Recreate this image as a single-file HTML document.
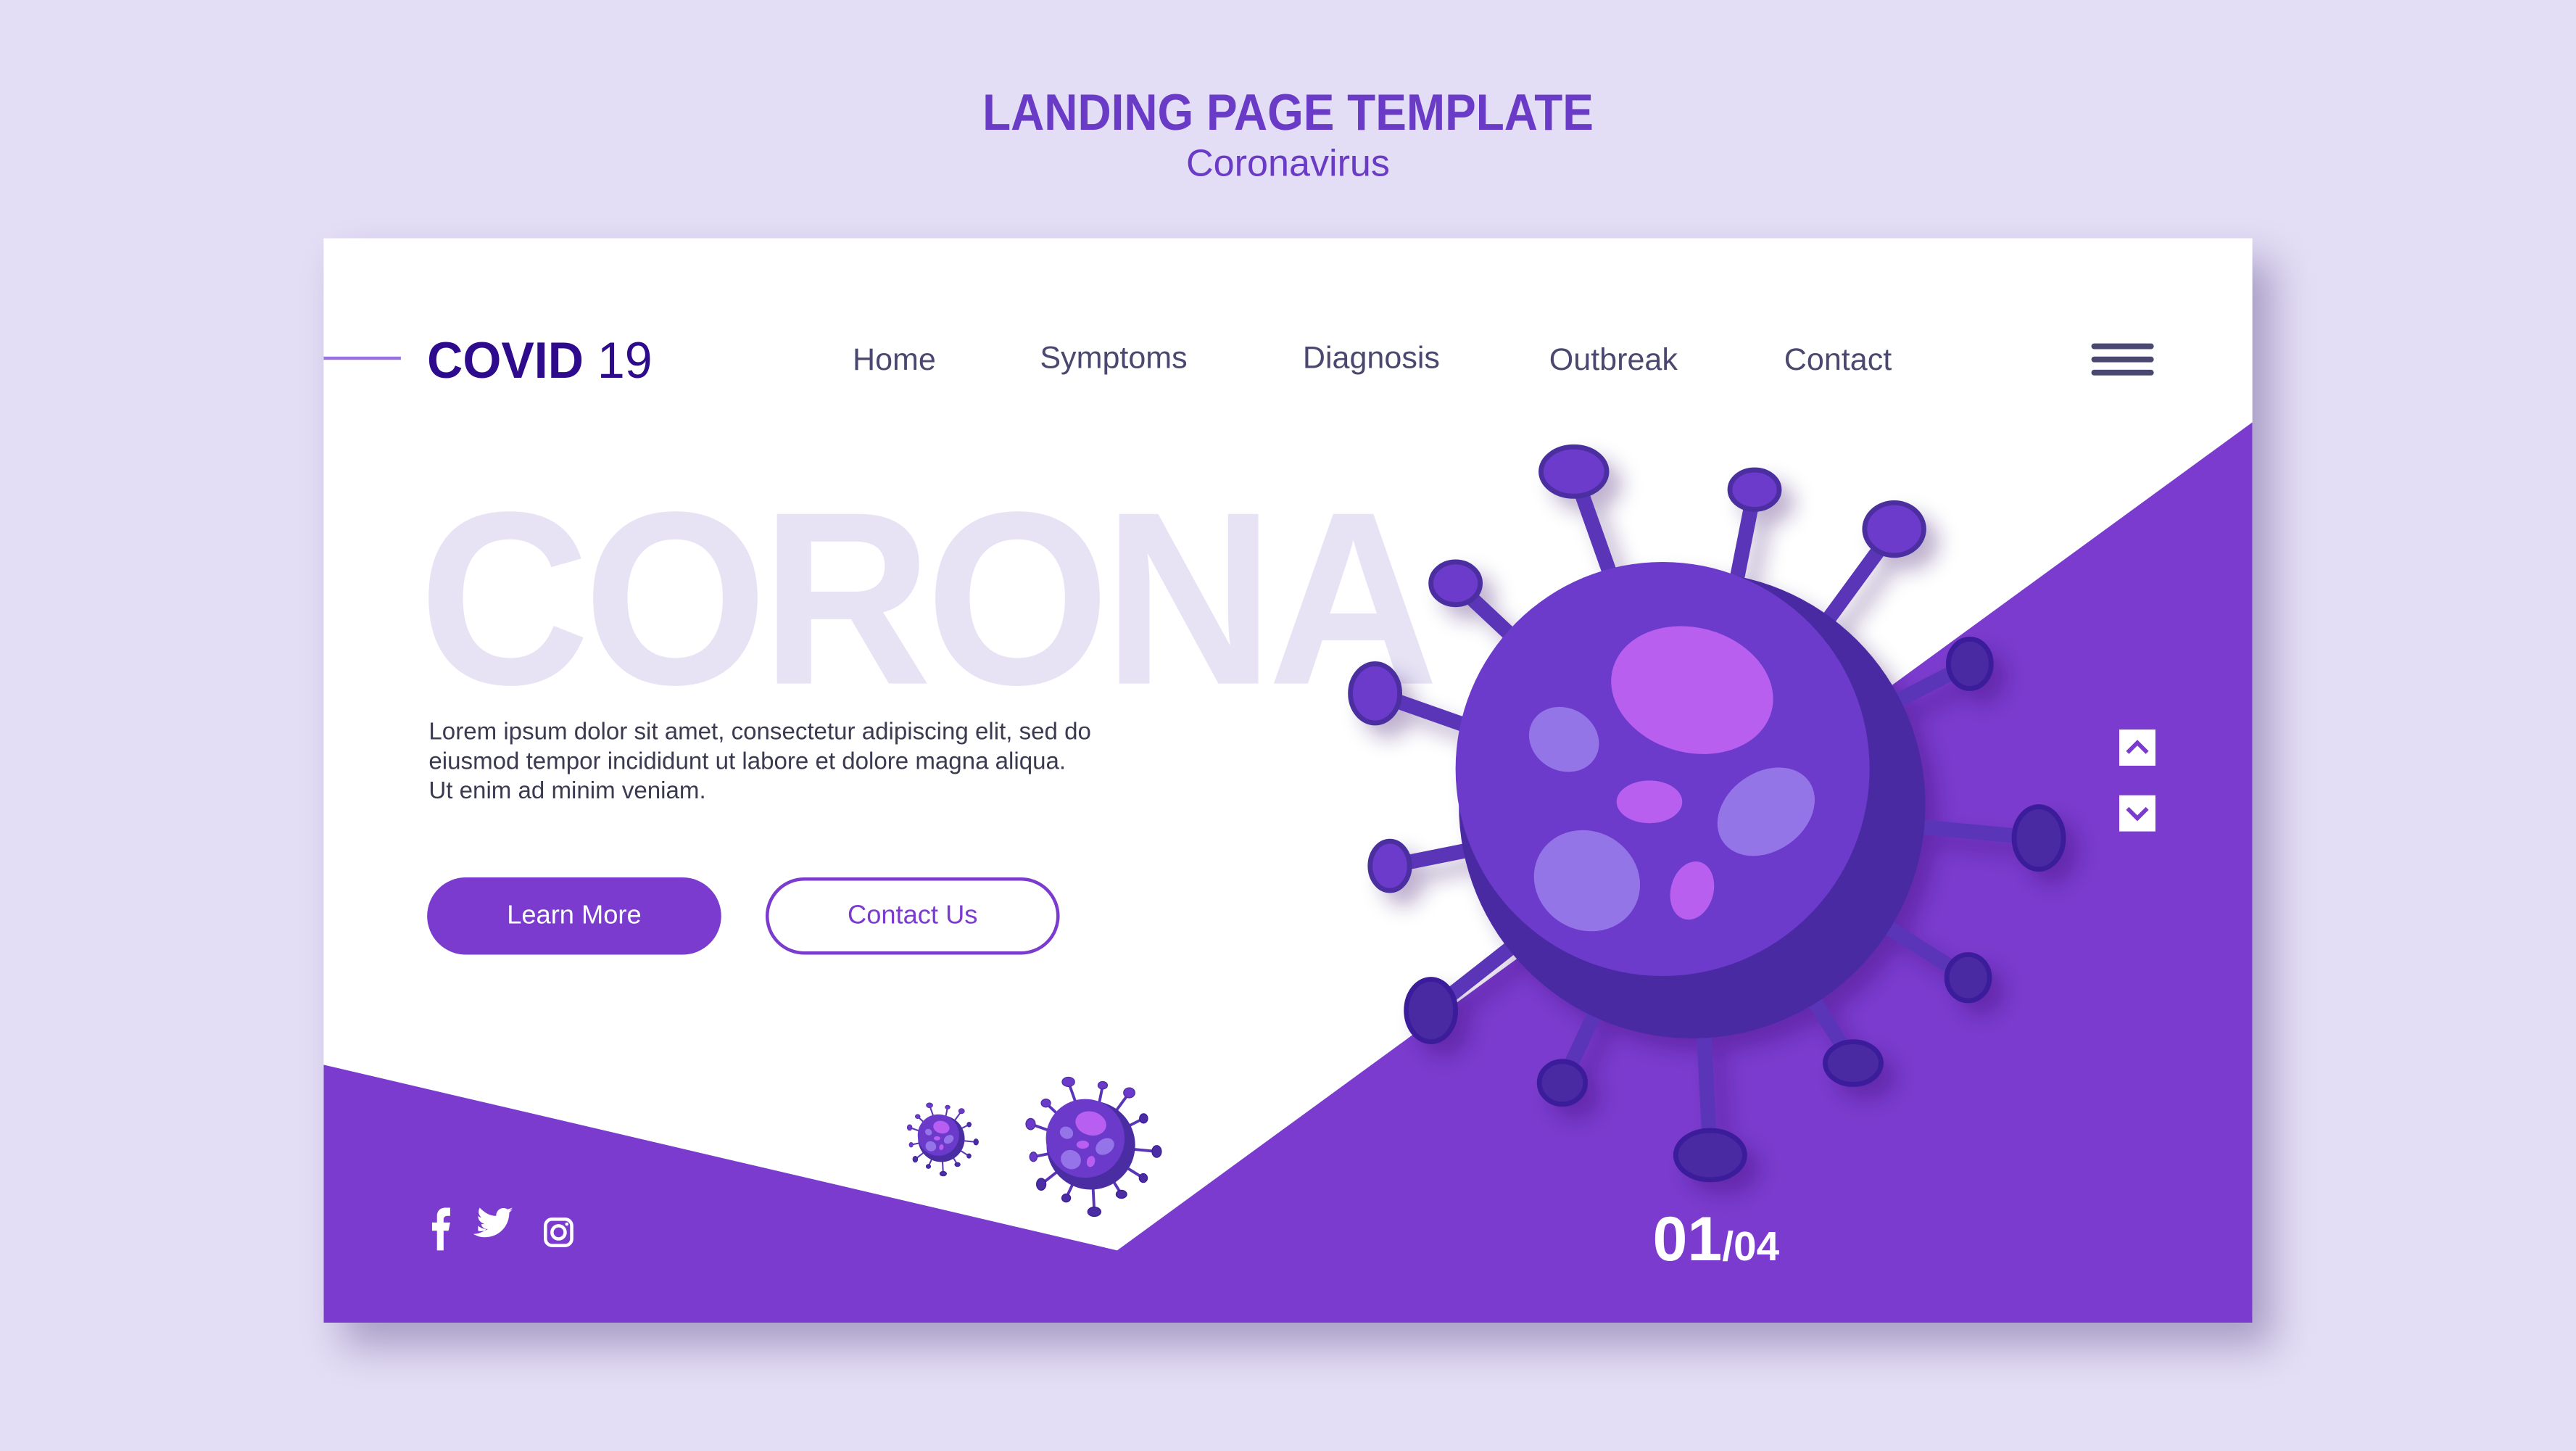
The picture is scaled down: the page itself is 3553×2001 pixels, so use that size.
<!DOCTYPE html>
<html><head><meta charset="utf-8"><style>
html,body{margin:0;padding:0;width:3553px;height:2000px;overflow:hidden;background:#e3ddf5}
#w{position:absolute;left:0;top:0;width:1568px;height:883px;transform:scale(2.26594);transform-origin:0 0;font-family:"Liberation Sans",sans-serif}
.t{position:absolute;left:0;width:1568px;text-align:center}
#card{position:absolute;left:197px;top:145px;width:1174px;height:660px;background:#fff;box-shadow:12px 14px 22px rgba(60,40,110,.35);overflow:hidden}
.nav{position:absolute;top:64px;font-size:19px;color:#4a4870}
.btn{position:absolute;top:389px;height:47px;border-radius:24px;font-size:16px;text-align:center;line-height:47px;box-sizing:border-box}
</style></head><body><div id="w">
<div class="t" style="top:51px;font-size:31px;font-weight:bold;color:#6a3bc6;transform:scaleX(.91)">LANDING PAGE TEMPLATE</div>
<div class="t" style="top:86px;font-size:23px;color:#6a3bc6">Coronavirus</div>
<div id="card">
<div style="position:absolute;left:58px;top:133px;font-size:150px;font-weight:bold;color:#e7e3f5;letter-spacing:-4px;transform:scaleX(.96);transform-origin:0 0">CORONA</div>
<svg width="1174" height="660" style="position:absolute;left:0;top:0">
<defs>
<filter id="sh" x="-20%" y="-20%" width="150%" height="150%"><feDropShadow dx="8" dy="8" stdDeviation="6" flood-color="#2a1060" flood-opacity=".3"/></filter>
<g id="v">
<g stroke="#5a35b8" stroke-linecap="round" fill="none">
<path d="M0 0L-72-203M0 0L38-192M0 0L123-168M0 0L-144-135M0 0L-193-68M0 0L169-86M0 0L-184 37M0 0L211 20M0 0L168 105M0 0L-159 125M0 0L-79 169M0 0L98 157M0 0L11 213" stroke-width="9"/>
</g>
<circle r="142" fill="#4a2ca3"/>
<circle cx="-18" cy="-22" r="126" fill="#6c3acb"/>
<g fill="#6c3acb" stroke="#4b2ea0" stroke-width="3">
<ellipse cx="-72" cy="-203" rx="20" ry="15"/><ellipse cx="38" cy="-192" rx="15" ry="12"/><ellipse cx="123" cy="-168" rx="18" ry="16"/><ellipse cx="-144" cy="-135" rx="15" ry="13"/><ellipse cx="-193" cy="-68" rx="15" ry="18"/><ellipse cx="-184" cy="37" rx="12" ry="15"/>
</g>
<g fill="#4a2ca3" stroke="#3a1c9a" stroke-width="3">
<ellipse cx="169" cy="-86" rx="13" ry="15"/><ellipse cx="211" cy="20" rx="15" ry="19"/><ellipse cx="168" cy="105" rx="13" ry="14"/><ellipse cx="-159" cy="125" rx="15" ry="19"/><ellipse cx="-79" cy="169" rx="14" ry="13"/><ellipse cx="98" cy="157" rx="17" ry="13"/><ellipse cx="11" cy="213" rx="21" ry="15"/>
</g>
<ellipse cx="0" cy="-70" rx="50" ry="38" fill="#b85ef0" transform="rotate(15 0 -70)"/>
<ellipse cx="-78" cy="-40" rx="22" ry="19" fill="#9474e8" transform="rotate(30 -78 -40)"/>
<ellipse cx="-26" cy="-2" rx="20" ry="13" fill="#b85ef0"/>
<ellipse cx="45" cy="4" rx="32" ry="24" fill="#9474e8" transform="rotate(-35 45 4)"/>
<ellipse cx="-64" cy="46" rx="33" ry="30" fill="#9474e8" transform="rotate(30 -64 46)"/>
<ellipse cx="0" cy="52" rx="13" ry="18" fill="#b85ef0" transform="rotate(15 0 52)"/>
</g>
</defs>
<polygon points="0,503 483,616 1174,112 1174,660 0,660" fill="#7b3bce"/>
<line x1="0" y1="73" x2="47" y2="73" stroke="#9a72e0" stroke-width="2"/>
<g filter="url(#sh)"><use href="#v" transform="translate(833,345)"/></g>
<use href="#v" transform="translate(376,548) scale(0.1)"/>
<use href="#v" transform="translate(467,552) scale(0.19)"/>
<rect x="1093" y="299" width="22" height="22" fill="#fff"/><path d="M1098 313l6-6 6 6" stroke="#7b3bce" stroke-width="2.5" fill="none"/>
<rect x="1093" y="339" width="22" height="22" fill="#fff"/><path d="M1098 347l6 6 6-6" stroke="#7b3bce" stroke-width="2.5" fill="none"/>
<g fill="#fff"><path d="M69 616v-12h-3v-5h3v-4c0-3 2-5 5-5h3v5h-2c-1 0-2 1-2 2v2h4l-1 5h-3v12z"/>
<path d="M94 604c3 1 6-1 6-1-3 0-4-2-4-3h2c-3-1-4-3-4-5 1 1 2 1 2 1-2-2-2-4-1-6 3 3 6 5 10 5 0-4 4-6 7-4l3-1-2 2 2-1-2 2c0 8-6 15-15 15-3 0-5-1-7-2 3 0 6-1 8-3-2 0-4-1-5-2z"/></g>
<rect x="135" y="597" width="16" height="16" rx="4" fill="none" stroke="#fff" stroke-width="2"/><circle cx="143" cy="605" r="4" fill="none" stroke="#fff" stroke-width="2"/><circle cx="148" cy="600" r="1" fill="#fff"/>
<g fill="#4a4870"><rect x="1076" y="64" width="38" height="3.5" rx="1.7"/><rect x="1076" y="72" width="38" height="3.5" rx="1.7"/><rect x="1076" y="80" width="38" height="3.5" rx="1.7"/></g>
</svg>
<div style="position:absolute;left:63px;top:57px;font-size:31px;color:#2e0a8c;white-space:nowrap;transform:scaleX(.97);transform-origin:0 0"><b>COVID</b> 19</div>
<div class="nav" style="left:322px">Home</div>
<div class="nav" style="left:436px;top:63px">Symptoms</div>
<div class="nav" style="left:596px;top:63px">Diagnosis</div>
<div class="nav" style="left:746px">Outbreak</div>
<div class="nav" style="left:889px">Contact</div>
<div style="position:absolute;left:64px;top:292px;font-size:14.6px;line-height:18px;color:#3a3a50">Lorem ipsum dolor sit amet, consectetur adipiscing elit, sed do<br>eiusmod tempor incididunt ut labore et dolore magna aliqua.<br>Ut enim ad minim veniam.</div>
<div class="btn" style="left:63px;width:179px;background:#7b3bce;color:#fff">Learn More</div>
<div class="btn" style="left:269px;width:179px;border:2px solid #7b3bce;color:#7b3bce;line-height:43px">Contact Us</div>
<div style="position:absolute;left:809px;top:589px;color:#fff;font-weight:bold;white-space:nowrap"><span style="font-size:38px">01</span><span style="font-size:25px">/04</span></div>
</div>
</div></body></html>
